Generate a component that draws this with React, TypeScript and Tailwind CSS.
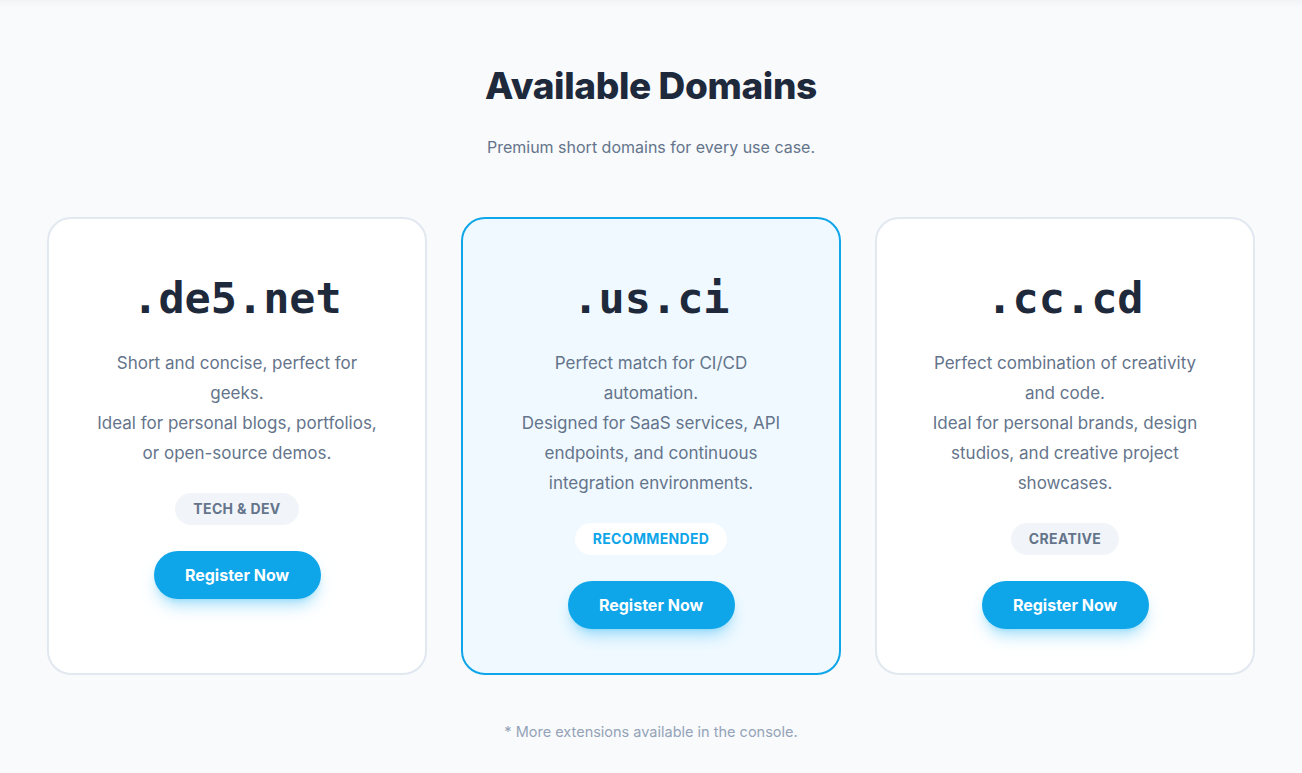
const DOMAINS = [
  {
    name: ".de5.net",
    lines: ["Short and concise, perfect for", "geeks.", "Ideal for personal blogs, portfolios,", "or open-source demos."],
    tag: "Tech & Dev",
    featured: false,
  },
  {
    name: ".us.ci",
    lines: ["Perfect match for CI/CD", "automation.", "Designed for SaaS services, API", "endpoints, and continuous", "integration environments."],
    tag: "Recommended",
    featured: true,
  },
  {
    name: ".cc.cd",
    lines: ["Perfect combination of creativity", "and code.", "Ideal for personal brands, design", "studios, and creative project", "showcases."],
    tag: "Creative",
    featured: false,
  },
];

export default function App() {
  return (
    <div className="min-h-[773px] bg-[#f8fafc] font-['Inter',sans-serif] bg-gradient-to-b from-[#f1f3f6] via-[#f8fafc] via-[1%] to-[#f8fafc]">
      <section className="pt-[66px] pb-10 px-[47px]">
        <h1 className="text-center text-[37px] leading-10 font-extrabold tracking-[-0.01em] text-[#1e293b]">Available Domains</h1>
        <p className="text-center text-base leading-6 text-[#64748b] mt-[29px]">Premium short domains for every use case.</p>

        <div className="grid grid-cols-3 gap-[34px] mt-[58px]">
          {DOMAINS.map((d) => (
            <div
              key={d.name}
              className={
                d.featured
                  ? "flex flex-col items-center rounded-3xl border-2 border-[#0ea5e9] bg-[#f0f9ff] px-10 pt-12 pb-11"
                  : "flex flex-col items-center rounded-3xl border-2 border-[#e2e8f0] bg-white px-10 pt-12 pb-11"
              }
            >
              <h2 className="font-['DejaVu_Sans_Mono',monospace] text-[43.5px] leading-[63px] font-bold text-[#1e293b]">{d.name}</h2>
              <div className="mt-[18px] text-center text-[17px] leading-[30px] text-[#64748b]">
                {d.lines.map((l) => (
                  <div key={l}>{l}</div>
                ))}
              </div>
              <span
                className={
                  d.featured
                    ? "mt-[25px] h-8 flex items-center rounded-full bg-white px-[18px] text-sm font-bold uppercase tracking-wide text-[#0ea5e9]"
                    : "mt-[25px] h-8 flex items-center rounded-full bg-[#f1f5f9] px-[18px] text-sm font-bold uppercase tracking-wide text-[#64748b]"
                }
              >
                {d.tag}
              </span>
              <button className="mt-[26px] h-12 w-[167px] rounded-full bg-[#0ea5e9] text-base font-bold text-white shadow-lg shadow-sky-500/30">
                Register Now
              </button>
            </div>
          ))}
        </div>

        <p className="text-center text-[14.5px] leading-5 text-[#94a3b8] mt-[47px]">* More extensions available in the console.</p>
      </section>
    </div>
  );
}
